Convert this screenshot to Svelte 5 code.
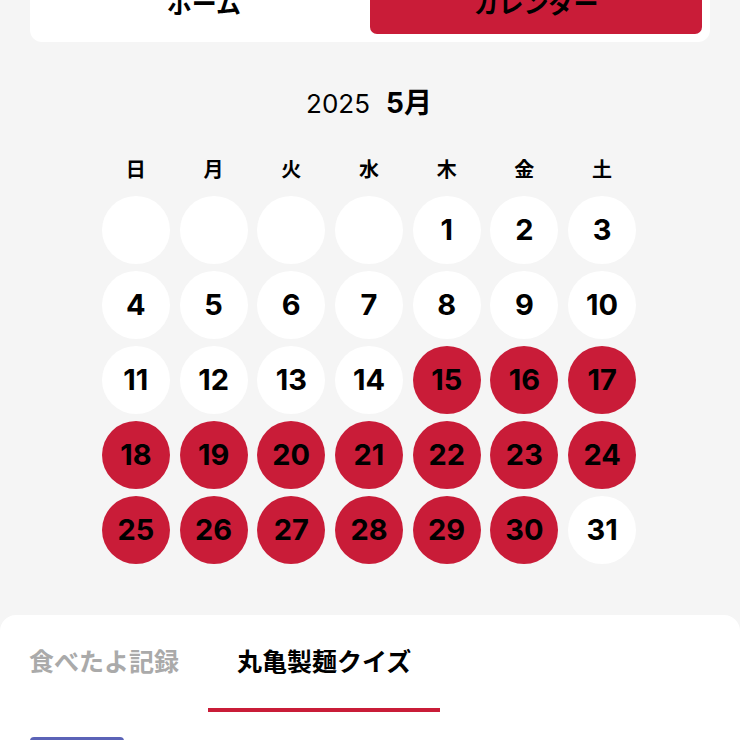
<script>
  const weekdays = ['日', '月', '火', '水', '木', '金', '土'];
  const year = 2025;
  const month = 5;
  const offset = new Date(year, month - 1, 1).getDay();
  const total = new Date(year, month, 0).getDate();
  const active = (day) => day >= 15 && day <= 30;

  const weeks = [];
  for (let start = 1 - offset; start <= total; start += 7) {
    weeks.push(
      Array.from({ length: 7 }, (_, i) => {
        const day = start + i;
        return day > 0 && day <= total ? day : null;
      })
    );
  }

  let view = $state('calendar');
  let tab = $state('quiz');
</script>

<div class="page">
  <nav class="switch">
    <button class:selected={view === 'home'} onclick={() => (view = 'home')}>ホーム</button>
    <button class:selected={view === 'calendar'} onclick={() => (view = 'calendar')}>カレンダー</button>
  </nav>

  <main>
    <h1><span class="year">{year}</span><span>{month}月</span></h1>
    <table>
      <thead>
        <tr>
          {#each weekdays as name}
            <th scope="col">{name}</th>
          {/each}
        </tr>
      </thead>
      <tbody>
        {#each weeks as week}
          <tr>
            {#each week as day}
              <td><span class="day" class:active={active(day)}>{day ?? ''}</span></td>
            {/each}
          </tr>
        {/each}
      </tbody>
    </table>
  </main>

  <section class="panel">
    <div class="tabs">
      <button class:current={tab === 'log'} onclick={() => (tab = 'log')}>食べたよ記録</button>
      <button class:current={tab === 'quiz'} onclick={() => (tab = 'quiz')}>丸亀製麺クイズ</button>
    </div>
    <div class="badge"></div>
  </section>
</div>

<style>
  :global(body) {
    background: #f5f5f5;
    overflow: hidden;
  }

  .page {
    height: 100vh;
    display: flex;
    flex-direction: column;
    overflow: hidden;
    color: #000;
    font-family: Inter, 'Noto Sans CJK JP', sans-serif;
  }

  button {
    border: 0;
    background: none;
    color: inherit;
    font-family: inherit;
    font-size: 25px;
    font-weight: 700;
    line-height: 36px;
    white-space: nowrap;
    cursor: pointer;
  }

  .switch {
    display: flex;
    flex: none;
    margin: -34px 30px 0;
    padding: 8px;
    border-radius: 12px;
    background: #fff;
  }

  .switch button {
    flex: 1;
    padding: 12px;
    border-radius: 7px;
  }

  .switch .selected {
    background: #c91c38;
  }

  main {
    padding: 43px 2px 48px 0;
  }

  h1 {
    display: flex;
    justify-content: center;
    align-items: baseline;
    gap: 16px;
    margin: 0;
    font-size: 28px;
    font-weight: 700;
    line-height: 36px;
  }

  .year {
    font-size: 26px;
    font-weight: 400;
  }

  table {
    width: 544px;
    margin: 30px auto 0;
    border-spacing: 0;
    table-layout: fixed;
  }

  th {
    padding: 0 0 4px;
    font-size: 20px;
    font-weight: 700;
    line-height: 36px;
  }

  td {
    height: 75px;
    padding: 0;
    vertical-align: middle;
  }

  .day {
    display: flex;
    align-items: center;
    justify-content: center;
    width: 68px;
    height: 68px;
    margin: 0 auto;
    border-radius: 50%;
    background: #fff;
    font-size: 29px;
    font-weight: 700;
  }

  .active {
    background: #c91c38;
  }

  .panel {
    flex: 1;
    border-radius: 16px 16px 0 0;
    background: #fff;
  }

  .tabs {
    display: flex;
    margin-bottom: 25px;
  }

  .tabs button {
    padding: 29px 29px 28px;
    border-bottom: 4px solid transparent;
    color: #aaa;
  }

  .tabs .current {
    border-color: #c91c38;
    color: #000;
  }

  .badge {
    width: 94px;
    height: 32px;
    margin-left: 30px;
    border-radius: 4px;
    background: #5b63b7;
  }
</style>
